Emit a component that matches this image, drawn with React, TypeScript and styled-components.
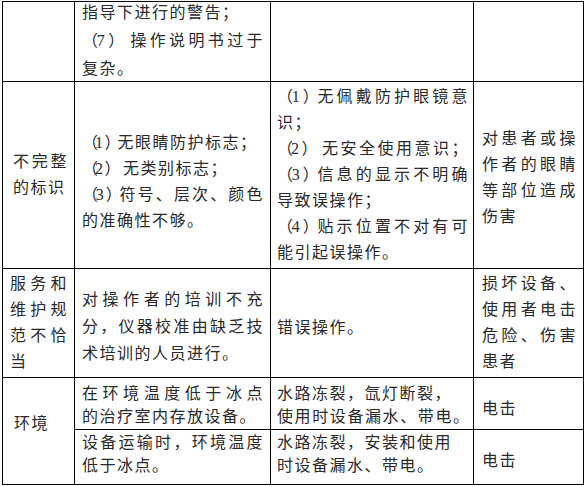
import React from 'react';
import styled, { createGlobalStyle } from 'styled-components';

const GlobalStyle = createGlobalStyle`
  html, body {
    margin: 0;
    padding: 0;
    background: #fff;
  }
  body {
    font-family: "Liberation Serif", "Noto Sans CJK SC", serif;
  }
`;

const Page = styled.div`
  width: 585px;
  height: 486px;
  box-sizing: border-box;
  padding: 1px 0 0 2px;
  overflow: hidden;
`;

const Table = styled.table`
  border-collapse: collapse;
  table-layout: fixed;
  width: 582px;
  color: #2a2a2a;
  font-size: 16px;
`;

const Col = styled.col<{ $w: number }>`
  width: ${p => p.$w}px;
`;

const Row = styled.tr<{ $h: number }>`
  height: ${p => p.$h}px;
`;

// left / right padding per column
const pads: Record<number, [number, number]> = {
  1: [7, 6],
  2: [7, 6],
  3: [6, 4],
  4: [8, 6],
};

const Cell = styled.td<{
  $col: 1 | 2 | 3 | 4;
  $pt?: number;
  $pb?: number;
  $pl?: number;
  $lh?: number;
  $top?: boolean;
}>`
  border: 1px solid #000;
  padding: ${p => p.$pt ?? 0}px ${p => pads[p.$col][1]}px ${p => p.$pb ?? 0}px
    ${p => p.$pl ?? pads[p.$col][0]}px;
  vertical-align: ${p => (p.$top ? 'top' : 'middle')};
  line-height: ${p => p.$lh ?? 26}px;
  overflow: hidden;
`;

const Block = styled.div<{ $trim?: number }>`
  margin: ${p => -(p.$trim ?? 0)}px 0;
`;

const Line = styled.div<{ $j?: boolean; $fit?: boolean }>`
  letter-spacing: ${p => (p.$fit ? 0 : 1.5)}px;
  text-align: ${p => (p.$j ? 'justify' : 'left')};
  text-align-last: ${p => (p.$j ? 'justify' : 'auto')};
`;

// full-width brackets around list numbers sit tighter than a full em
const Paren = styled.span`
  letter-spacing: -3px;
`;

type LineSpec = string | { t: string; j?: boolean; fit?: boolean };
const J = (t: string): LineSpec => ({ t, j: true });
const F = (t: string): LineSpec => ({ t, j: true, fit: true });

const renderText = (t: string) => {
  const m = t.match(/^（(\d+)）(.*)$/);
  if (!m) return t;
  return (
    <>
      <Paren>（</Paren>
      {m[1]}
      <Paren>）</Paren>
      {m[2]}
    </>
  );
};

const Text: React.FC<{ lines: LineSpec[] }> = ({ lines }) => (
  <>
    {lines.map((l, i) => {
      const s = typeof l === 'string' ? { t: l } : l;
      return (
        <Line key={i} $j={s.j} $fit={s.fit}>
          {renderText(s.t)}
        </Line>
      );
    })}
  </>
);

export default function App() {
  return (
    <Page>
      <GlobalStyle />
      <Table>
        <colgroup>
          <Col $w={72} />
          <Col $w={196} />
          <Col $w={203} />
          <Col $w={110} />
        </colgroup>
        <tbody>
          <Row $h={80}>
            <Cell $col={1} />
            <Cell $col={2} $top $lh={28}>
              <Block $trim={3}>
                <Text lines={['指导下进行的警告；', J('（7） 操作说明书过于'), '复杂。']} />
              </Block>
            </Cell>
            <Cell $col={3} />
            <Cell $col={4} />
          </Row>

          <Row $h={187}>
            <Cell $col={1} $pl={10}>
              <Text lines={[J('不完整'), '的标识']} />
            </Cell>
            <Cell $col={2} $pt={13}>
              <Text
                lines={['（1）无眼睛防护标志；', '（2） 无类别标志；', J('（3）符号、层次、颜色'), '的准确性不够。']}
              />
            </Cell>
            <Cell $col={3}>
              <Text
                lines={[
                  J('（1）无佩戴防护眼镜意'),
                  '识；',
                  J('（2） 无安全使用意识；'),
                  J('（3）信息的显示不明确'),
                  '导致误操作；',
                  J('（4）贴示位置不对有可'),
                  '能引起误操作。',
                ]}
              />
            </Cell>
            <Cell $col={4} $pt={6}>
              <Text lines={[J('对患者或操'), J('作者的眼睛'), J('等部位造成'), '伤害']} />
            </Cell>
          </Row>

          <Row $h={109}>
            <Cell $col={1}>
              <Text lines={[J('服务和'), J('维护规'), J('范不恰'), '当']} />
            </Cell>
            <Cell $col={2} $pt={7} $lh={27}>
              <Text lines={[J('对操作者的培训不充'), J('分，仪器校准由缺乏技'), '术培训的人员进行。']} />
            </Cell>
            <Cell $col={3} $pt={9}>
              <Text lines={['错误操作。']} />
            </Cell>
            <Cell $col={4}>
              <Text lines={[J('损坏设备、'), J('使用者电击'), J('危险、伤害'), '患者']} />
            </Cell>
          </Row>

          <Row $h={52}>
            <Cell $col={1} rowSpan={2} $pb={15} $pl={11}>
              <Text lines={['环境']} />
            </Cell>
            <Cell $col={2} $pt={3} $lh={23}>
              <Text lines={[J('在环境温度低于冰点'), '的治疗室内存放设备。']} />
            </Cell>
            <Cell $col={3} $pt={3} $lh={23}>
              <Text lines={['水路冻裂，氙灯断裂，', F('使用时设备漏水、带电。')]} />
            </Cell>
            <Cell $col={4} $pt={10}>
              <Text lines={['电击']} />
            </Cell>
          </Row>

          <Row $h={55}>
            <Cell $col={2} $pb={6} $lh={23}>
              <Text lines={[J('设备运输时，环境温度'), '低于冰点。']} />
            </Cell>
            <Cell $col={3} $pb={6} $lh={23}>
              <Text lines={['水路冻裂，安装和使用', '时设备漏水、带电。']} />
            </Cell>
            <Cell $col={4} $pt={7}>
              <Text lines={['电击']} />
            </Cell>
          </Row>
        </tbody>
      </Table>
    </Page>
  );
}
